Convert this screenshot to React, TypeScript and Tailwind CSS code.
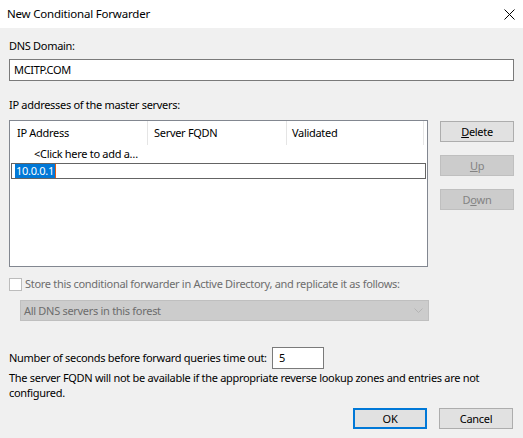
import React from 'react';

const font = '"Noto Sans", "Open Sans", sans-serif';

const Btn: React.FC<{ label: React.ReactNode; disabled?: boolean; primary?: boolean; className?: string }> = ({
  label,
  disabled,
  primary,
  className
}) => (
  <div
    className={[
      'flex h-[21px] w-[74px] items-center justify-center',
      disabled
        ? 'border border-[#bfbfbf] bg-[#cccccc] text-[#838383]'
        : primary
        ? 'border-2 border-[#0078d7] bg-[#e1e1e1] text-black'
        : 'border border-[#adadad] bg-[#e1e1e1] text-black',
      className
    ]
      .filter(Boolean)
      .join(' ')}
  >
    {label}
  </div>
);

export default function App() {
  return (
    <div
      className="h-[438px] w-[523px] overflow-hidden whitespace-nowrap bg-[#f0f0f0] text-[11px] leading-[16px] tracking-[-0.3px] text-black"
      style={{ fontFamily: font }}
    >
      {/* title bar */}
      <div className="flex h-[28px] items-center justify-between bg-white pl-[7px] pr-[7px]">
        <span className="text-[11.5px] tracking-[-0.2px]">New Conditional Forwarder</span>
        <svg width="11" height="11" viewBox="0 0 11 11" className="mr-[1px]">
          <path d="M0.5 0.5 L10.5 10.5 M10.5 0.5 L0.5 10.5" stroke="#000" strokeWidth="1" />
        </svg>
      </div>

      <div className="px-[9px]">
        <div className="mt-[10px]">DNS Domain:</div>
        <div className="mt-[5px] flex h-[22px] w-[505px] items-center border border-[#7a7a7a] bg-white pl-[4px]">
          MCITP.COM
        </div>

        <div className="mt-[16px]">IP addresses of the master servers:</div>

        <div className="mt-[7px] flex">
          {/* list */}
          <div className="h-[147px] w-[420px] border border-[#828790] bg-white">
            <div className="flex h-[24px] items-center">
              <div className="flex h-full w-[138px] items-center border-r border-[#e5e5e5] pl-[7px]">IP Address</div>
              <div className="flex h-full w-[139px] items-center border-r border-[#e5e5e5] pl-[6px]">Server FQDN</div>
              <div className="flex h-full w-[137px] items-center border-r border-[#e5e5e5] pl-[5px]">Validated</div>
            </div>
            <div className="flex h-[18px] items-center pl-[24px]">&lt;Click here to add a…</div>
            <div className="mx-[1px] flex h-[16px] items-center border border-[#646464] pl-[3px]">
              <span className="bg-[#0078d7] px-[1px] leading-[14px] text-white">10.0.0.1</span>
              <span className="h-[14px] w-[1px] bg-[#e8590c]" />
            </div>
          </div>

          {/* side buttons */}
          <div className="ml-[12px] flex flex-col gap-[13px] pt-[1px]">
            <Btn label={<><span className="underline">D</span>elete</>} />
            <Btn disabled label={<><span className="underline">U</span>p</>} />
            <Btn disabled label={<>D<span className="underline">o</span>wn</>} />
          </div>
        </div>

        <div className="mt-[9px] flex h-[16px] items-center">
          <div className="h-[13px] w-[13px] border border-[#bcbcbc] bg-white" />
          <span className="ml-[3px] text-[#6d6d6d]">
            Store this conditional forwarder in Active Directory, and replicate it as follows:
          </span>
        </div>

        <div className="ml-[11px] mt-[8px] flex h-[21px] w-[409px] items-center justify-between border border-[#bfbfbf] bg-[#cccccc] pl-[3px] pr-[5px] text-[#6d6d6d]">
          <span>All DNS servers in this forest</span>
          <svg width="9" height="6" viewBox="0 0 9 6">
            <path d="M0.5 0.5 L4.5 4.5 L8.5 0.5" fill="none" stroke="#b4b4b4" strokeWidth="1" />
          </svg>
        </div>

        <div className="mt-[26px] flex h-[22px] items-center">
          <span className="w-[263px]">Number of seconds before forward queries time out:</span>
          <div className="flex h-[22px] w-[52px] items-center border border-[#7a7a7a] bg-white pl-[6px]">5</div>
        </div>

        <div className="mt-[1px] leading-[15px]">
          The server FQDN will not be available if the appropriate reverse lookup zones and entries are not
          <br />
          configured.
        </div>

        <div className="mt-[8px] flex justify-end gap-[12px] pr-[1px]">
          <Btn primary label="OK" />
          <Btn label="Cancel" />
        </div>
      </div>
    </div>
  );
}
